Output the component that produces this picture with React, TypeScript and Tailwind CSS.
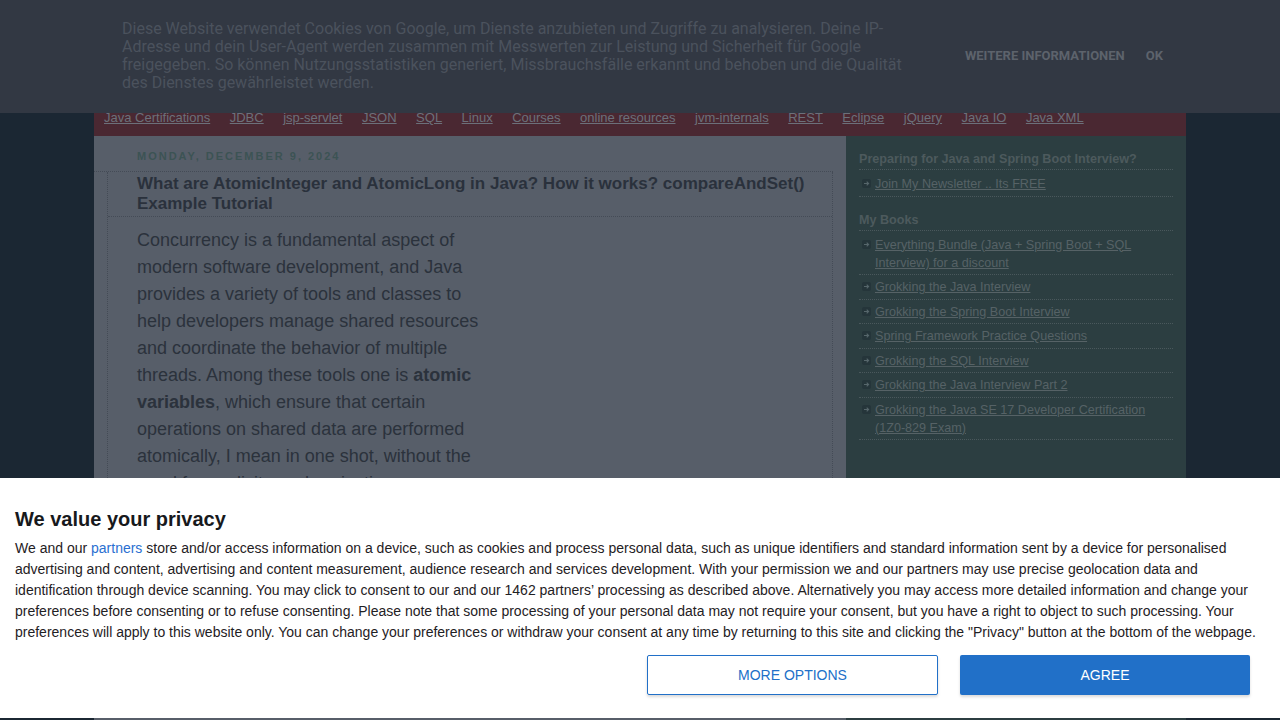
import React from "react";

const navLinks = [
  "Java Certifications",
  "JDBC",
  "jsp-servlet",
  "JSON",
  "SQL",
  "Linux",
  "Courses",
  "online resources",
  "jvm-internals",
  "REST",
  "Eclipse",
  "jQuery",
  "Java IO",
  "Java XML",
];

const books = [
  "Everything Bundle (Java + Spring Boot + SQL Interview) for a discount",
  "Grokking the Java Interview",
  "Grokking the Spring Boot Interview",
  "Spring Framework Practice Questions",
  "Grokking the SQL Interview",
  "Grokking the Java Interview Part 2",
  "Grokking the Java SE 17 Developer Certification (1Z0-829 Exam)",
];

function Bullet() {
  return (
    <svg width="9" height="9" viewBox="0 0 9 9" className="mt-[4px] shrink-0">
      <rect width="9" height="9" rx="2" fill="#25353a" />
      <path d="M2 4.5h4.5M4.7 2.6l1.9 1.9-1.9 1.9" stroke="#56666b" strokeWidth="1.1" fill="none" />
    </svg>
  );
}

function SideItem({ text }: { text: string }) {
  return (
    <li className="flex gap-[4px] border-b border-dotted border-[#4a585c] pt-[3px] pb-[2.5px] pl-[3px] text-[12.6px] leading-[18px]">
      <Bullet />
      <a className="text-[#566266] underline">{text}</a>
    </li>
  );
}

function CookieBar() {
  return (
    <div className="fixed top-0 left-0 right-0 z-20 flex h-[113px] items-center bg-[#323843] font-['Roboto',sans-serif]">
      <p className="ml-[122px] w-[790px] pb-[2px] text-[16px] leading-[18px] text-[#4b525d]">
        Diese Website verwendet Cookies von Google, um Dienste anzubieten und Zugriffe zu analysieren. Deine IP-Adresse und dein User-Agent werden zusammen mit Messwerten zur Leistung und Sicherheit für Google freigegeben. So können Nutzungsstatistiken generiert, Missbrauchsfälle erkannt und behoben und die Qualität des Dienstes gewährleistet werden.
      </p>
      <div className="ml-auto mr-[117px] mb-[2px] flex gap-[21px] text-[13px] font-bold text-[#5d636c]">
        <span>WEITERE INFORMATIONEN</span>
        <span>OK</span>
      </div>
    </div>
  );
}

function Consent() {
  return (
    <div className="fixed left-0 right-0 bottom-[2px] z-30 bg-white px-[15px] pt-[29px] pb-[23px] font-['Liberation_Sans',Arial,sans-serif]">
      <h2 className="text-[20px] font-bold leading-6 text-[#17191c]">We value your privacy</h2>
      <p className="mt-[7px] text-[14px] leading-[21px] text-[#1f2124]">
        We and our <a className="text-[#2a6fd1]">partners</a> store and/or access information on a device, such as cookies and process personal data, such as unique identifiers and standard information sent by a device for personalised advertising and content, advertising and content measurement, audience research and services development. With your permission we and our partners may use precise geolocation data and identification through device scanning. You may click to consent to our and our 1462 partners’ processing as described above. Alternatively you may access more detailed information and change your preferences before consenting or to refuse consenting. Please note that some processing of your personal data may not require your consent, but you have a right to object to such processing. Your preferences will apply to this website only. You can change your preferences or withdraw your consent at any time by returning to this site and clicking the "Privacy" button at the bottom of the webpage.
      </p>
      <div className="mt-[12px] flex justify-end gap-[22px] pr-[15px]">
        <button className="h-10 w-[291px] rounded-[2px] border border-[#2170c8] bg-white text-[14px] text-[#2170c8] shadow-[0_2px_3px_rgba(0,0,0,0.15)]">
          MORE OPTIONS
        </button>
        <button className="h-10 w-[290px] rounded-[2px] bg-[#2170c8] text-[14px] text-white shadow-[0_2px_3px_rgba(0,0,0,0.15)]">
          AGREE
        </button>
      </div>
    </div>
  );
}

export default function App() {
  return (
    <div className="min-h-screen bg-[#1b2733] font-['Liberation_Sans',Arial,sans-serif]">
      <CookieBar />
      <div className="mx-auto w-[1092px]">
        <div className="h-[100px] bg-[#323843]" />
        <nav className="flex h-9 items-center gap-[19.5px] bg-[#4a2832] pl-[10px] text-[13px] text-[#6c707a]">
          {navLinks.map((l) => (
            <a key={l} className="underline">
              {l}
            </a>
          ))}
        </nav>
        <div className="flex">
          <main className="w-[752px] bg-[#575e69] pb-[300px]">
            <div className="pt-[13px] pl-[43px] text-[11px] font-bold leading-[14px] tracking-[2px] text-[#3c5354]">
              MONDAY, DECEMBER 9, 2024
            </div>
            <div className="mt-[8px] mr-[13px] border-t border-dotted border-[#444b56]" />
            <div className="mx-[13px] border-x border-dotted border-[#444b56]">
              <h1 className="border-b border-dotted border-[#444b56] pt-[2px] pb-[2px] pl-[29px] pr-[20px] text-[17px] font-bold leading-[20px] text-[#2a313c]">
                What are AtomicInteger and AtomicLong in Java? How it works? compareAndSet() Example Tutorial
              </h1>
              <div className="pt-[10px] pl-[29px]">
                <p className="w-[352px] text-[18px] leading-[27px] text-[#2b323c]">
                  Concurrency is a fundamental aspect of modern software development, and Java provides a variety of tools and classes to help developers manage shared resources and coordinate the behavior of multiple threads. Among these tools one is <b>atomic variables</b>, which ensure that certain operations on shared data are performed atomically, I mean in one shot, without the need for explicit synchronization mechanisms like locks.
                </p>
              </div>
            </div>
          </main>
          <aside className="w-[340px] bg-[#2c3e41] px-[13px] pt-[15px]">
            <h3 className="border-b border-dotted border-[#4a585c] pb-[2px] text-[12.6px] font-bold leading-[16px] text-[#4d5a5d]">
              Preparing for Java and Spring Boot Interview?
            </h3>
            <ul className="pt-[2px]">
              <SideItem text="Join My Newsletter .. Its FREE" />
            </ul>
            <h3 className="mt-[15px] border-b border-dotted border-[#4a585c] pb-[2px] text-[12.6px] font-bold leading-[16px] text-[#4d5a5d]">
              My Books
            </h3>
            <ul className="pt-[2px]">
              {books.map((b) => (
                <SideItem key={b} text={b} />
              ))}
            </ul>
          </aside>
        </div>
      </div>
      <Consent />
    </div>
  );
}
